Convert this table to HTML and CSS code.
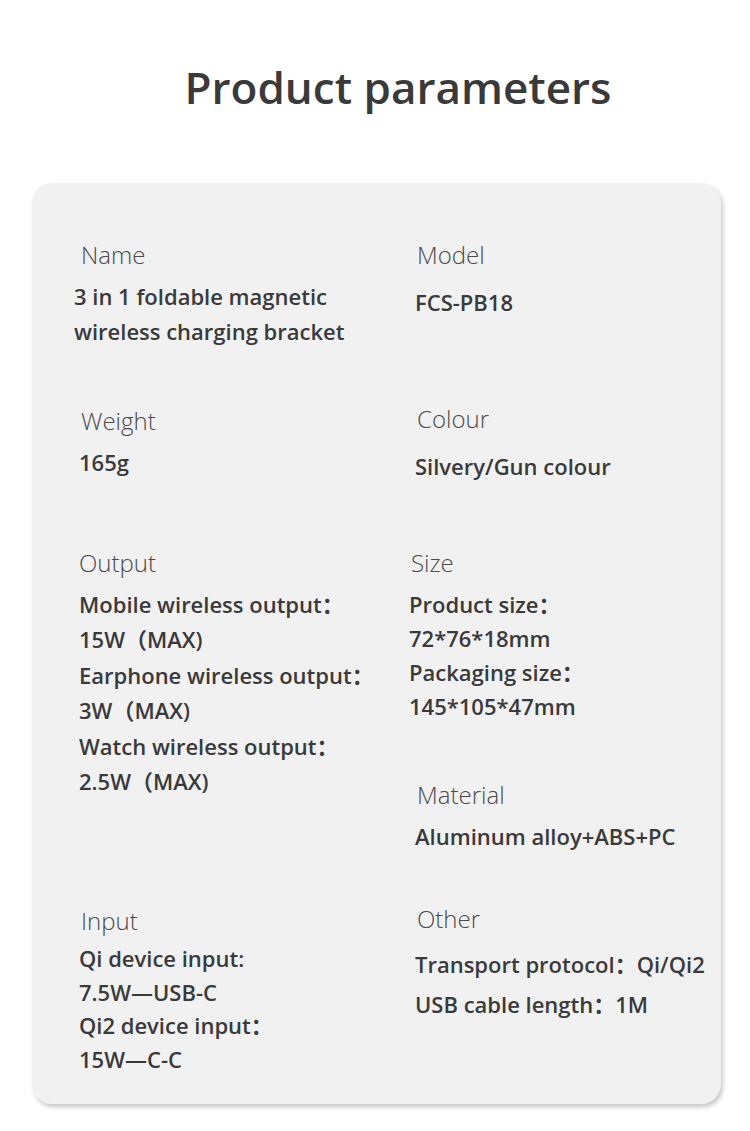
FILE: index.html
```html
<!DOCTYPE html>
<html lang="en">
<head>
<meta charset="utf-8">
<title>Product parameters</title>
<link rel="stylesheet" href="styles.css">
</head>
<body>
<main class="page">
  <h1 class="title">Product parameters</h1>
  <section class="card">
    <div class="row row-1">
      <div class="cell">
        <div class="label">Name</div>
        <div class="values shift-l">
          <div class="v">3 in 1 foldable magnetic</div>
          <div class="v">wireless charging bracket</div>
        </div>
      </div>
      <div class="cell right">
        <div class="label">Model</div>
        <div class="values down">
          <div class="v">FCS-PB18</div>
        </div>
      </div>
    </div>

    <div class="row row-2">
      <div class="cell">
        <div class="label">Weight</div>
        <div class="values">
          <div class="v">165g</div>
        </div>
      </div>
      <div class="cell right">
        <div class="label up">Colour</div>
        <div class="values down">
          <div class="v">Silvery/Gun colour</div>
        </div>
      </div>
    </div>

    <div class="row row-3">
      <div class="cell">
        <div class="label">Output</div>
        <div class="values loose">
          <div class="v">Mobile wireless output：</div>
          <div class="v">15W（MAX)</div>
          <div class="v">Earphone wireless output：</div>
          <div class="v">3W（MAX)</div>
          <div class="v">Watch wireless output：</div>
          <div class="v">2.5W（MAX)</div>
        </div>
      </div>
      <div class="cell right">
        <div class="group size">
          <div class="label">Size</div>
          <div class="values">
            <div class="v">Product size：</div>
            <div class="v">72*76*18mm</div>
            <div class="v">Packaging size：</div>
            <div class="v">145*105*47mm</div>
          </div>
        </div>
        <div class="group material">
          <div class="label">Material</div>
          <div class="values">
            <div class="v">Aluminum alloy+ABS+PC</div>
          </div>
        </div>
      </div>
    </div>

    <div class="row row-4">
      <div class="cell">
        <div class="label">Input</div>
        <div class="values tight">
          <div class="v">Qi device input:</div>
          <div class="v">7.5W—USB-C</div>
          <div class="v">Qi2 device input：</div>
          <div class="v">15W—C-C</div>
        </div>
      </div>
      <div class="cell right">
        <div class="label up">Other</div>
        <div class="values wide down">
          <div class="v">Transport protocol：Qi/Qi2</div>
          <div class="v">USB cable length：1M</div>
        </div>
      </div>
    </div>
  </section>
</main>
</body>
</html>
```

FILE: styles.css
```css
* { box-sizing: border-box; }

html, body {
  margin: 0;
  padding: 0;
  background: #ffffff;
}

body {
  font-family: "Open Sans", "Noto Sans", "Noto Sans CJK SC", sans-serif;
  color: #3c3c3c;
}

.page {
  width: 750px;
  height: 1131px;
  overflow: hidden;
  padding-top: 57px;
}

.title {
  margin: 0;
  padding-left: 46px;
  text-align: center;
  font-size: 44px;
  line-height: 60px;
  font-weight: 600;
  color: #3a3a3a;
}

.card {
  margin: 66px 0 0 32px;
  width: 689px;
  height: 921px;
  background: #f1f1f1;
  border-radius: 20px;
  box-shadow: 2px 3px 4px rgba(0, 0, 0, 0.22);
  padding: 57px 0 0 47px;
}

.row {
  display: grid;
  grid-template-columns: 336px 1fr;
}

.row-2 { margin-top: 57px; }
.row-3 { margin-top: 64px; }
.row-4 { margin-top: 53px; }

.cell {
  display: flex;
  flex-direction: column;
}

.label {
  font-size: 24px;
  line-height: 30px;
  font-weight: 300;
  color: #4a4a4a;
  padding-left: 2px;
}

.label.up { margin-top: -2px; }

.values {
  margin-top: 9px;
  font-size: 22px;
  line-height: 35px;
  font-weight: 600;
  color: #3a3a3a;
}

.values.shift-l { margin-left: -5px; }
.values.down { margin-top: 15px; }
.values.tight { margin-top: 6px; line-height: 33.5px; }
.values.wide { line-height: 40px; margin-top: 10px; }
.values.loose { line-height: 35.4px; }

.row-3 .cell:first-child .label { padding-left: 0; }
.row-3 .right { margin-left: -6px; }
.row-3 .right .values { line-height: 34px; }
.group.material { margin-top: 57px; margin-left: 6px; }
```
